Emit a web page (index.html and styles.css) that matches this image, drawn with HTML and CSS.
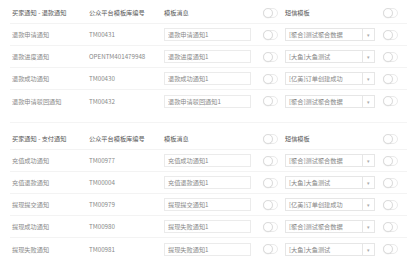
FILE: index.html
```html
<!DOCTYPE html>
<html lang="zh">
<head>
    <meta charset="UTF-8">
    <title>模板消息设置</title>
    <link rel="stylesheet" href="styles.css">
</head>
<body>
    <div class="section">
        <div class="row head">
            <div>买家通知 - 退款通知</div>
            <div>公众平台模板库编号</div>
            <div>模板消息</div>
            <div><span class="switch"></span></div>
            <div>短信模板</div>
            <div><span class="switch"></span></div>
        </div>
        <div class="row">
            <div>退款申请通知</div>
            <div>TM00431</div>
            <div><input class="box" value="退款申请通知1"></div>
            <div><span class="switch"></span></div>
            <div><div class="select"><span>[聚合]测试聚合数据</span><i>▾</i></div></div>
            <div><span class="switch"></span></div>
        </div>
        <div class="row">
            <div>退款进度通知</div>
            <div>OPENTM401479948</div>
            <div><input class="box" value="退款进度通知1"></div>
            <div><span class="switch"></span></div>
            <div><div class="select"><span>[大鱼]大鱼测试</span><i>▾</i></div></div>
            <div><span class="switch"></span></div>
        </div>
        <div class="row">
            <div>退款成功通知</div>
            <div>TM00430</div>
            <div><input class="box" value="退款成功通知1"></div>
            <div><span class="switch"></span></div>
            <div><div class="select"><span>[亿美]订单创建成功</span><i>▾</i></div></div>
            <div><span class="switch"></span></div>
        </div>
        <div class="row">
            <div>退款申请驳回通知</div>
            <div>TM00432</div>
            <div><input class="box" value="退款申请驳回通知1"></div>
            <div><span class="switch"></span></div>
            <div><div class="select"><span>[聚合]测试聚合数据</span><i>▾</i></div></div>
            <div><span class="switch"></span></div>
        </div>
    </div>

    <div class="section">
        <div class="row head">
            <div>买家通知 - 支付通知</div>
            <div>公众平台模板库编号</div>
            <div>模板消息</div>
            <div><span class="switch"></span></div>
            <div>短信模板</div>
            <div><span class="switch"></span></div>
        </div>
        <div class="row">
            <div>充值成功通知</div>
            <div>TM00977</div>
            <div><input class="box" value="充值成功通知1"></div>
            <div><span class="switch"></span></div>
            <div><div class="select"><span>[聚合]测试聚合数据</span><i>▾</i></div></div>
            <div><span class="switch"></span></div>
        </div>
        <div class="row">
            <div>充值退款通知</div>
            <div>TM00004</div>
            <div><input class="box" value="充值退款通知1"></div>
            <div><span class="switch"></span></div>
            <div><div class="select"><span>[大鱼]大鱼测试</span><i>▾</i></div></div>
            <div><span class="switch"></span></div>
        </div>
        <div class="row">
            <div>提现提交通知</div>
            <div>TM00979</div>
            <div><input class="box" value="提现提交通知1"></div>
            <div><span class="switch"></span></div>
            <div><div class="select"><span>[亿美]订单创建成功</span><i>▾</i></div></div>
            <div><span class="switch"></span></div>
        </div>
        <div class="row">
            <div>提现成功通知</div>
            <div>TM00980</div>
            <div><input class="box" value="提现失败通知1"></div>
            <div><span class="switch"></span></div>
            <div><div class="select"><span>[聚合]测试聚合数据</span><i>▾</i></div></div>
            <div><span class="switch"></span></div>
        </div>
        <div class="row">
            <div>提现失败通知</div>
            <div>TM00981</div>
            <div><input class="box" value="提现失败通知1"></div>
            <div><span class="switch"></span></div>
            <div><div class="select"><span>[大鱼]大鱼测试</span><i>▾</i></div></div>
            <div><span class="switch"></span></div>
        </div>
    </div>
</body>
</html>
```

FILE: styles.css
```css
body {
    margin: 0;
    padding: 2px 10px 0 10px;
    background: #fff;
    font-family: "Noto Sans CJK SC", "Open Sans", sans-serif;
    font-size: 6.2px;
    color: #888;
}
.section {
    width: 397px;
    padding-bottom: 10px;
    border-bottom: 1px solid #f4f4f4;
    margin-bottom: 5px;
}
.section:last-child {
    border-bottom: none;
}
.row {
    display: grid;
    grid-template-columns: 77px 75px 99px 22px 98px auto;
    align-items: center;
    height: 22px;
    box-sizing: border-box;
    padding-left: 2px;
    border-bottom: 1px solid #f3f3f3;
}
.row:last-child {
    border-bottom: none;
}
.head {
    color: #555;
}
.box {
    display: block;
    width: 87px;
    height: 13px;
    box-sizing: border-box;
    border: 1px solid #ebebeb;
    padding: 0 3px;
    font-family: inherit;
    font-size: 6.2px;
    color: #888;
    outline: none;
}
.switch {
    display: block;
    position: relative;
    width: 15px;
    height: 10px;
    box-sizing: border-box;
    border: 1px solid #ebebeb;
    border-radius: 5px;
    background: #fff;
}
.switch::before {
    content: "";
    position: absolute;
    left: -1px;
    top: -1px;
    width: 10px;
    height: 10px;
    box-sizing: border-box;
    border: 1px solid #dcdcdc;
    border-radius: 50%;
    background: #fff;
    box-shadow: 0 0.5px 1px rgba(0, 0, 0, 0.08);
}
.select {
    display: flex;
    align-items: center;
    width: 90px;
    height: 13px;
    box-sizing: border-box;
    border: 1px solid #e6e6e6;
    color: #888;
}
.select span {
    flex: 1;
    padding-left: 3px;
}
.select i {
    width: 11px;
    height: 100%;
    border-left: 1px solid #e6e6e6;
    display: flex;
    align-items: center;
    justify-content: center;
    font-style: normal;
    font-size: 5px;
    color: #aaa;
}
```
